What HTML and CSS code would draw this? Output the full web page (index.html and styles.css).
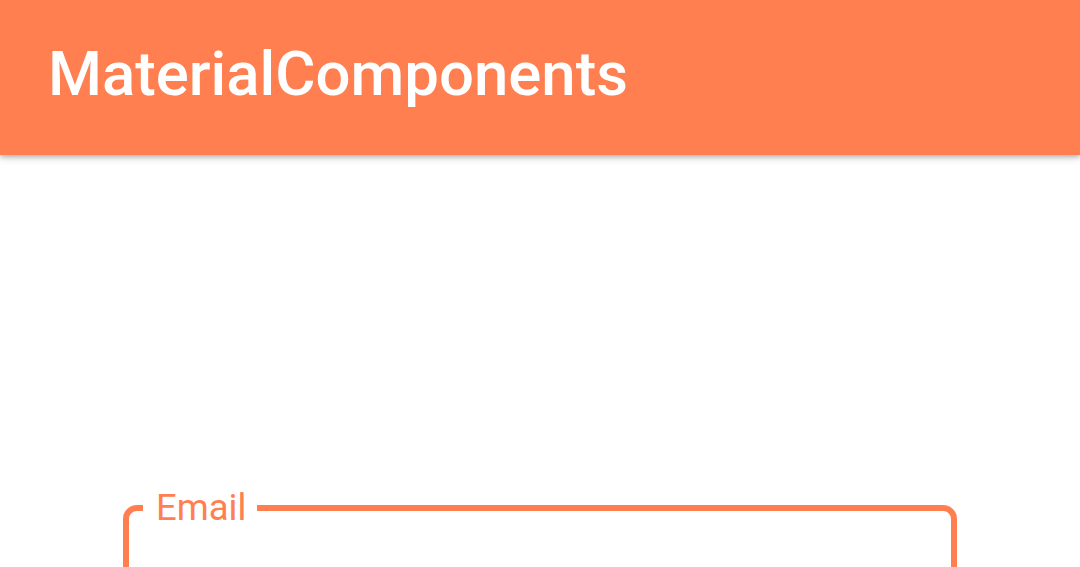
FILE: index.html
```html
<!DOCTYPE html>
<html>
<head>
<meta charset="utf-8">
<link rel="stylesheet" href="styles.css">
</head>
<body>
<header class="app-bar">
  <h1 class="title">MaterialComponents</h1>
</header>
<main class="content">
  <fieldset class="field">
    <legend class="field-label">Email</legend>
    <div class="field-input"></div>
  </fieldset>
</main>
</body>
</html>
```
FILE: styles.css
```css
html, body {
  margin: 0;
  padding: 0;
  background: #ffffff;
  font-family: Roboto, "Liberation Sans", sans-serif;
  overflow: hidden;
}
.app-bar {
  height: 155px;
  background: #ff7f50;
  display: flex;
  align-items: center;
  padding-left: 48px;
  box-shadow: 0 2px 4px rgba(0,0,0,0.2), 0 4px 8px rgba(0,0,0,0.12);
  position: relative;
  z-index: 1;
}
.title {
  margin: 0;
  color: #ffffff;
  font-size: 61.7px;
  font-weight: 500;
  letter-spacing: 0;
  line-height: 1;
  transform: translateY(-3px);
}
.content {
  display: flex;
  justify-content: center;
  padding-top: 335px;
}
.field {
  width: 834px;
  box-sizing: border-box;
  margin: 0;
  border: 6px solid #ff7f50;
  border-radius: 14px;
  padding: 0 20px;
  height: 200px;
}
.field-label {
  margin-left: -6px;
  padding: 0 11px 0 13px;
  color: #ff7f50;
  font-size: 36.5px;
  line-height: 1;
}
.field-input {
  height: 100px;
}
```
